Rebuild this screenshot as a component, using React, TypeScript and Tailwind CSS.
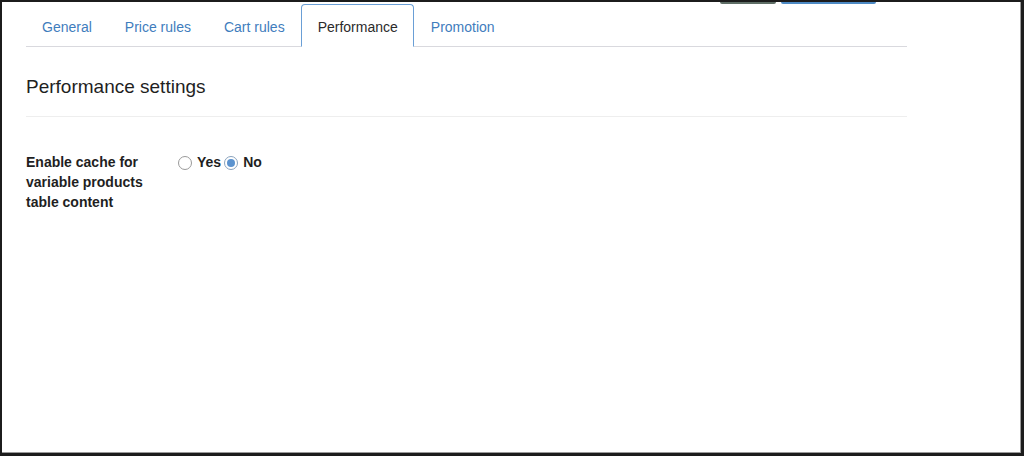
const tabs = ["General", "Price rules", "Cart rules", "Performance", "Promotion"];

function Radio({ checked }: { checked?: boolean }) {
  return (
    <span
      className={`mt-[4px] size-[14px] shrink-0 rounded-full border bg-white grid place-items-center ${
        checked ? "border-[#8aa3bd]" : "border-[#9a9a9a]"
      }`}
    >
      {checked && <span className="size-[8px] rounded-full bg-[#5b93cf]" />}
    </span>
  );
}

export default function App() {
  return (
    <div className="w-[1024px] h-[456px] bg-white border-l-2 border-t-2 border-r-[3px] border-b-[3px] border-[#1c1c1c] font-['Liberation_Sans',Arial,sans-serif] overflow-hidden">
      <div className="h-full border-r border-b border-[#9a9a9a]">
        {/* cut-off header buttons */}
        <div className="flex h-[2px] pl-[718px] gap-[5px]">
          <span className="w-[56px] h-[2px] rounded-b-[3px] bg-[#5f6e66]" />
          <span className="w-[95px] h-[2px] rounded-b-[3px] bg-[#4d8ac4]" />
        </div>

        <div className="pl-[24px] w-[905px]">
          {/* Tabs */}
          <div className="border-b border-[#d9d9de] h-[43px]">
            <div className="flex h-full -ml-px">
              {tabs.map((t) => {
                const active = t === "Performance";
                return (
                  <div
                    key={t}
                    className={`pl-4 pr-[15px] pt-[3px] flex items-center text-[14px] leading-none rounded-t-[4px] border ${
                      active
                        ? "border-[#6a9fd6] border-b-white mb-[-1px] bg-white text-[#2b2b2b]"
                        : "border-transparent text-[#3f7dbd]"
                    }`}
                  >
                    {t}
                  </div>
                );
              })}
            </div>
          </div>

          {/* Section heading */}
          <div className="mt-[28px] pb-[17px] border-b border-[#eeeeee]">
            <h2 className="text-[19px] leading-[24px] text-[#1f1f1f]">Performance settings</h2>
          </div>

          {/* Setting row */}
          <div className="mt-[35px] flex">
            <div className="w-[140px] text-[14px] leading-[20px] font-bold text-[#1f1f1f]">
              Enable cache for variable products table content
            </div>
            <div className="ml-[12px] flex items-start text-[14px] leading-[20px] font-bold text-[#1f1f1f]">
              <Radio />
              <span className="ml-[5px]">Yes</span>
              <span className="ml-[3px] flex">
                <Radio checked />
              </span>
              <span className="ml-[5px]">No</span>
            </div>
          </div>
        </div>
      </div>
    </div>
  );
}
